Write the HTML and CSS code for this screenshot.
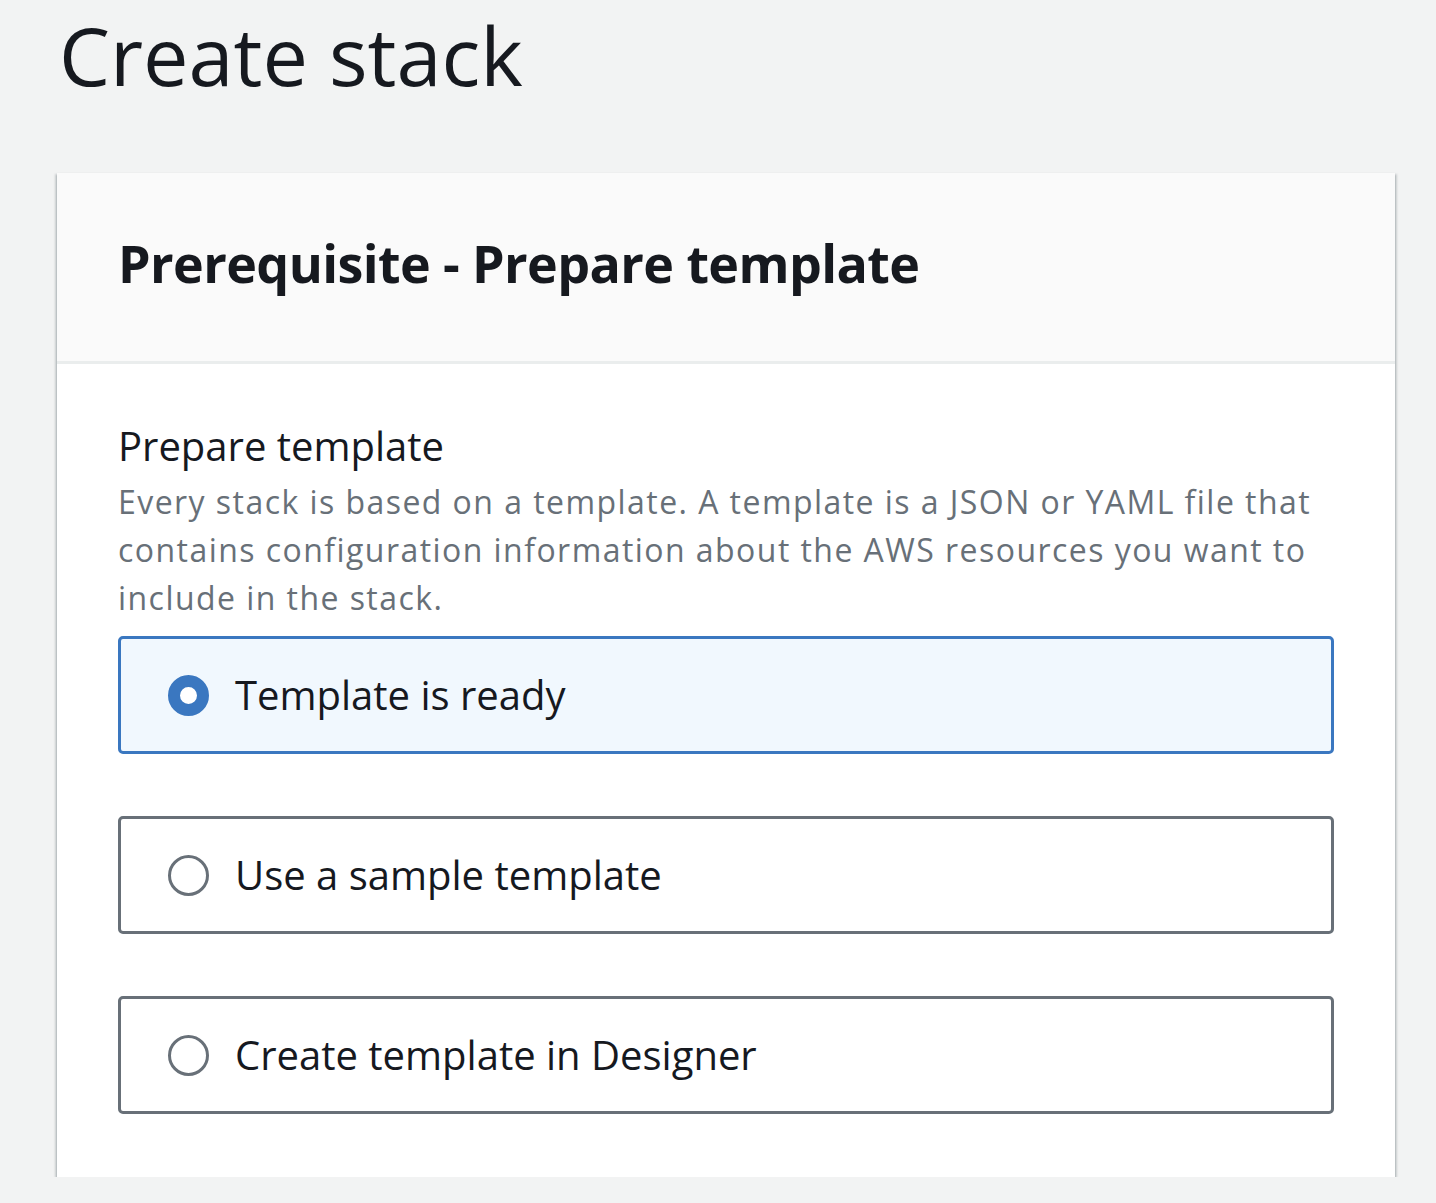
FILE: index.html
```html
<!DOCTYPE html>
<html lang="en">
<head>
<meta charset="utf-8">
<title>Create stack</title>
<link rel="stylesheet" href="styles.css">
</head>
<body>
<main class="page">
  <h1 class="page-title">Create stack</h1>
  <section class="card">
    <header class="card-header">
      <h2 class="card-title">Prerequisite - Prepare template</h2>
    </header>
    <div class="card-body">
      <div class="field-label">Prepare template</div>
      <p class="field-desc">Every stack is based on a template. A template is a JSON or YAML file that contains configuration information about the AWS resources you want to include in the stack.</p>
      <div class="tiles">
        <label class="tile tile-selected">
          <span class="radio radio-checked"></span>
          <span class="tile-text">Template is ready</span>
        </label>
        <label class="tile">
          <span class="radio"></span>
          <span class="tile-text">Use a sample template</span>
        </label>
        <label class="tile">
          <span class="radio"></span>
          <span class="tile-text">Create template in Designer</span>
        </label>
      </div>
    </div>
  </section>
</main>
</body>
</html>
```

FILE: styles.css
```css
html, body {
  margin: 0;
  padding: 0;
  background: #f2f3f3;
}
body {
  font-family: "Open Sans", "Noto Sans", sans-serif;
  color: #16191f;
}
.page {
  padding: 0 41px 0 57px;
}
.page-title {
  margin: 0;
  font-size: 81px;
  font-weight: 400;
  line-height: 100px;
  padding: 5px 0 0 2px;
  height: 173px;
  box-sizing: border-box;
}
.card {
  background: #fff;
  box-shadow: 0 2px 2px 0 rgba(0, 28, 36, 0.3), -2px 1px 2px 0 rgba(0, 28, 36, 0.15), 2px 1px 2px 0 rgba(0, 28, 36, 0.15);
}
.card-header {
  background: #fafafa;
  border-bottom: 3px solid #eaeded;
  height: 191px;
  box-sizing: border-box;
  display: flex;
  align-items: center;
  padding: 0 61px 8px;
}
.card-title {
  margin: 0;
  font-size: 52px;
  font-weight: 700;
  letter-spacing: -0.6px;
  line-height: 1.2;
}
.card-body {
  padding: 56px 61px 63px;
}
.field-label {
  font-size: 40px;
  line-height: 52px;
}
.field-desc {
  margin: 6px 0 14px;
  font-size: 32px;
  letter-spacing: 1.45px;
  line-height: 48px;
  color: #687078;
}
.tiles {
  display: flex;
  flex-direction: column;
  gap: 62px;
}
.tile {
  display: flex;
  align-items: center;
  height: 118px;
  box-sizing: border-box;
  border: 3px solid #687078;
  border-radius: 5px;
  padding-left: 47px;
  background: #fff;
}
.tile-selected {
  border-color: #3a77c0;
  background: #f1f8fe;
}
.radio {
  width: 41px;
  height: 41px;
  box-sizing: border-box;
  border-radius: 50%;
  border: 3px solid #687078;
  background: #fff;
  flex: none;
  margin-right: 26px;
}
.radio-checked {
  border: 12px solid #3a77c0;
}
.tile-text {
  font-size: 40px;
  line-height: 1;
}
```
